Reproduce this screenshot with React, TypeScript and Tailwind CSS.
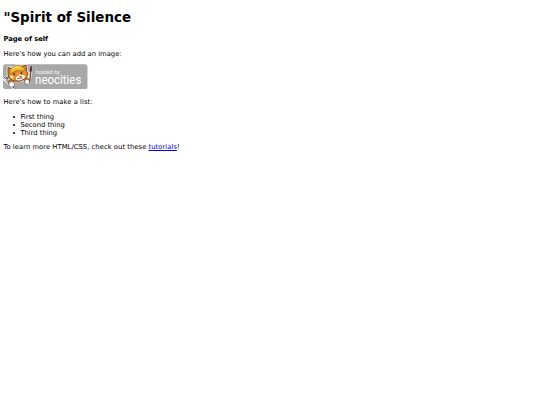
const things = ["First thing", "Second thing", "Third thing"];

function NeocitiesBadge() {
  return (
    <svg
      viewBox="0 0 85 26"
      className="block h-[26px] w-[85px]"
      role="img"
      aria-label="hosted by neocities"
    >
      <rect x="0" y="0.3" width="84.5" height="24.8" rx="2.6" fill="#a8a8a8" />

      {/* Light edge around the cat */}
      <path d="M4.5 2.5L9 3l5-2.7 6 .2L23.8.3l1 6.2 1.2 4-2 5-6 2.3-8 .2-5-3.4L3.6 9z" fill="#f5f0e8" stroke="#f5f0e8" strokeWidth="0.5" />

      {/* Wrench */}
      <path d="M.4 11.7l2.2 1.6 1-1.7 1.5 2.6-.8 2.2 7 8.3-1.7.5-7-7.2-2.3-1.7z" fill="#eeeef0" />
      <path d="M.8 12.7l2 2.2 1.2-2 .5 2-1.2 1.3 1.4 1.5M9.2 22l2.2 2.4" fill="none" stroke="#505056" strokeWidth="1" />

      {/* Cat head */}
      <path d="M5 3.6l4.2 1.2 9.6-2.5 4.3-1 .5 6 1.4 3-2.4 4.3-5.4 2.6-7.4-.2-4.1-3.2-.7-4.2z" fill="#e58e2e" stroke="#5c3318" strokeWidth="0.9" />
      <path d="M6.6 8.4c1-4.7 5.1-7.5 10.6-7l4.5 2.8-1.3 3-6.4-.6-6.6 3.3z" fill="#ebba38" stroke="#8a5a1c" strokeWidth="0.6" />
      <path d="M8.4 6.2c2-2.7 5.3-3.8 9-3" fill="none" stroke="#ffe46d" strokeWidth="1" />
      <path d="M13 13.4l3.6-2.8 4.3.3 1.4 1.4-1 2.2-4 2-4.2-.6z" fill="#fff1dc" />
      <path d="M6.6 12.2l2.4-.8 1.8 1.8-1.7 1.6z" fill="#fff1dc" />
      <path d="M11 8.9l.5 2.4M18.2 8l.5 2.2" stroke="#4c2817" strokeWidth="1.2" />
      <path d="M16.5 12.4l1.8-.3-.7 1.8M14.2 14.4l1.8.3 1.6-.8 1.8.5" fill="none" stroke="#6b3626" strokeWidth="0.8" />

      {/* Left paw */}
      <path d="M4.7 18.2l2.4-2.3 3.1 1.7-.3 3-3 .7z" fill="#d98b3d" stroke="#5c3824" strokeWidth="0.6" />
      <ellipse cx="8.6" cy="20.3" rx="2.9" ry="2.8" fill="#fff" stroke="#5c3824" strokeWidth="0.6" />

      {/* Paintbrush and right paw */}
      <path d="M26.7 7l2.3.2-1.4 12-2 1.5-2.5-2.2z" fill="#f0e9df" />
      <path d="M27.1 8l1.2.1-1 10.2-1.4 1.4z" fill="#81451d" />
      <path d="M28.6.9c.9 2.2.8 4.9.1 7.3l-2.1-.3c-.3-2.8.2-5.1 2-7z" fill="#5f1a28" stroke="#f2e9e1" strokeWidth="0.4" />
      <path d="M21.4 16.2l1.8-2.4 3.4 1.2-.2 3.5-3.1 1.6z" fill="#dd8c36" stroke="#5c3824" strokeWidth="0.6" />
      <ellipse cx="24.1" cy="17.8" rx="2.4" ry="2.5" fill="#fff" stroke="#5c3824" strokeWidth="0.5" />

      <text x="32.4" y="9.8" textLength="24.6" lengthAdjust="spacingAndGlyphs" fill="#f4f4f4" className="font-[Roboto,sans-serif] text-[6.2px]">
        hosted by
      </text>
      <text x="32.1" y="19.6" textLength="46.2" lengthAdjust="spacingAndGlyphs" fill="#fff" className="font-[Roboto,sans-serif] text-[12.6px]">
        neocities
      </text>
    </svg>
  );
}

export default function App() {
  return (
    <main className="min-h-screen bg-white px-[3.4px] pt-[10px] font-['DejaVu_Sans',sans-serif] text-[6.75px] leading-[8px] text-black">
      <h1 className="mb-[9px] text-[13.45px] leading-[16px] font-bold">"Spirit of Silence</h1>
      <p className="mb-[7px] font-bold tracking-[-0.02px]">Page of self</p>
      <p className="mb-[6px] tracking-[0.035px]">Here's how you can add an image:</p>
      <NeocitiesBadge />

      <p className="mt-[8px] mb-[7px] tracking-[0.055px]">Here's how to make a list:</p>
      <ul className="mb-[6px] pl-[10px]">
        {things.map((thing) => (
          <li key={thing} className="flex items-center gap-[5px]">
            <span className="size-[2px] rounded-full bg-black" />
            {thing}
          </li>
        ))}
      </ul>

      <p className="tracking-[0.06px]">
        To learn more HTML/CSS, check out these{" "}
        <a href="#" className="text-[#0000ee] underline">
          tutorials
        </a>
        !
      </p>
    </main>
  );
}
